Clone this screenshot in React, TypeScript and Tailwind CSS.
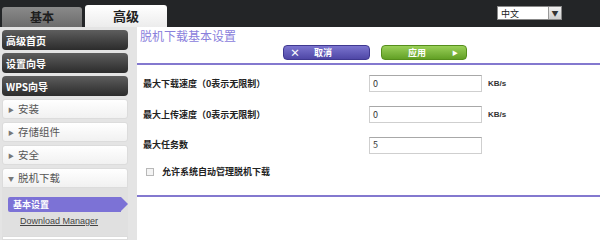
export default function App() {
  const font = { fontFamily: '"Noto Sans CJK SC", "Liberation Sans", sans-serif' };

  const darkItems = ["高级首页", "设置向导", "WPS向导"];
  const lightItems = ["安装", "存储组件", "安全"];

  const rows = [
    { label: "最大下载速度（0表示无限制）", value: "0", unit: "KB/s" },
    { label: "最大上传速度（0表示无限制）", value: "0", unit: "KB/s" },
    { label: "最大任务数", value: "5", unit: "" },
  ];

  return (
    <div className="w-[600px] h-[240px] overflow-hidden bg-white flex flex-col" style={font}>
      {/* top bar */}
      <div className="h-[27px] shrink-0 bg-[#232527] flex items-end justify-between pl-[2px] pr-[38px]">
        <div className="flex items-end gap-[3px]">
          <div className="w-[80px] h-[20px] rounded-t-[3px] bg-gradient-to-b from-[#8a8a8a] to-[#6c6c6c] flex items-center justify-center text-[12px] font-bold text-[#1e1e1e]">
            基本
          </div>
          <div className="w-[82px] h-[22px] rounded-t-[3px] bg-gradient-to-b from-white to-[#ececec] flex items-center justify-center text-[13px] font-bold text-[#222]">
            高级
          </div>
        </div>
        <div className="mb-[2px] w-[65px] h-[14px] bg-white border border-[#888] flex items-center justify-between self-center mt-[1px]">
          <span className="pl-[3px] text-[9px] leading-none text-[#222]">中文</span>
          <span className="w-[13px] h-[12px] bg-gradient-to-b from-[#f0f0f0] to-[#cfcfcf] border-l border-[#999] flex items-center justify-center text-[7px] text-[#333]">
            ▼
          </span>
        </div>
      </div>

      <div className="flex flex-1 min-h-0">
        {/* sidebar */}
        <div className="w-[137px] shrink-0 bg-[#e4e4e4] pt-[3px] pl-[2px] pr-[9px] flex flex-col gap-[3px]">
          {darkItems.map((t) => (
            <div
              key={t}
              className="h-[20px] rounded-[4px] bg-gradient-to-b from-[#5e5e5e] to-[#2c2c2c] flex items-center pl-[4px] text-[10px] font-bold text-white"
            >
              {t}
            </div>
          ))}
          {lightItems.map((t) => (
            <div
              key={t}
              className="h-[20px] rounded-[3px] bg-gradient-to-b from-white to-[#f1f1f1] border border-[#dcdcdc] flex items-center pl-[5px] gap-[4px] text-[10.5px] text-[#555]"
            >
              <span className="text-[6px] text-[#777]">▶</span>
              {t}
            </div>
          ))}
          <div className="flex flex-col">
            <div className="h-[20px] rounded-t-[3px] bg-gradient-to-b from-white to-[#f1f1f1] border border-[#dcdcdc] flex items-center pl-[5px] gap-[4px] text-[10.5px] text-[#555]">
              <span className="text-[6px] text-[#777]">▼</span>
              脱机下载
            </div>
            <div className="h-[48px] bg-[#e0e0e0] pl-[6px] pt-[9px] flex flex-col">
              <div className="relative w-[113px] h-[15px] bg-[#7c72d6] rounded-l-[2px] flex items-center pl-[5px] text-[9px] font-bold text-white">
                基本设置
                <span className="absolute right-[-7px] top-0 w-0 h-0 border-y-[7.5px] border-y-transparent border-l-[7px] border-l-[#7c72d6]" />
              </div>
              <div className="pl-[12px] pt-[5px] text-[9px] leading-none text-[#444] underline" style={{ fontFamily: '"Liberation Sans", sans-serif' }}>
                Download Manager
              </div>
            </div>
            <div className="h-[4px] bg-white border border-[#dcdcdc]" />
          </div>
        </div>

        {/* main */}
        <div className="flex-1 flex flex-col">
          <div className="h-[18px] pl-[3px] flex items-center text-[12px] text-[#8a80dc]">脱机下载基本设置</div>
          <div className="h-[18px] flex items-start pl-[146px] gap-[11px]">
            <div className="w-[87px] h-[15px] rounded-[4px] bg-gradient-to-b from-[#7b74cf] to-[#4f47a6] border border-[#3f3890] flex items-center text-white text-[9px] font-bold">
              <span className="pl-[6px] w-[30px] text-[10px]">×</span>
              <span>取消</span>
            </div>
            <div className="w-[86px] h-[15px] rounded-[4px] bg-gradient-to-b from-[#9ad058] to-[#62a024] border border-[#558e1c] flex items-center justify-between text-white text-[9px] font-bold pl-[26px] pr-[8px]">
              <span>应用</span>
              <span className="text-[6px]">▶</span>
            </div>
          </div>
          <div className="h-[2px] bg-[#8378cf]" />
          <div className="flex flex-col pl-[6px] pt-[5px]">
            {rows.map((r, i) => (
              <div key={i} className={`flex items-center ${i === 0 ? "h-[27px]" : i === 1 ? "h-[35px]" : "h-[26px]"}`}>
                <span className="w-[226px] text-[9px] font-bold text-[#222]">{r.label}</span>
                <div className="w-[113px] h-[17px] border border-[#cfcfcf] border-t-[#a8a8a8] bg-white flex items-center pl-[3px] text-[9px] text-[#333]">
                  {r.value}
                </div>
                <span className="pl-[6px] text-[8px] font-bold text-[#333]" style={{ fontFamily: '"Liberation Sans", sans-serif' }}>
                  {r.unit}
                </span>
              </div>
            ))}
            <div className="h-[27px] flex items-center pl-[3px] gap-[8px]">
              <span className="w-[8px] h-[8px] border border-[#b8b8b8] bg-[#f4f4f4]" />
              <span className="text-[9px] font-bold text-[#222]">允许系统自动管理脱机下载</span>
            </div>
          </div>
          <div className="mt-[10px] h-[2px] bg-[#8378cf]" />
        </div>
      </div>
    </div>
  );
}
